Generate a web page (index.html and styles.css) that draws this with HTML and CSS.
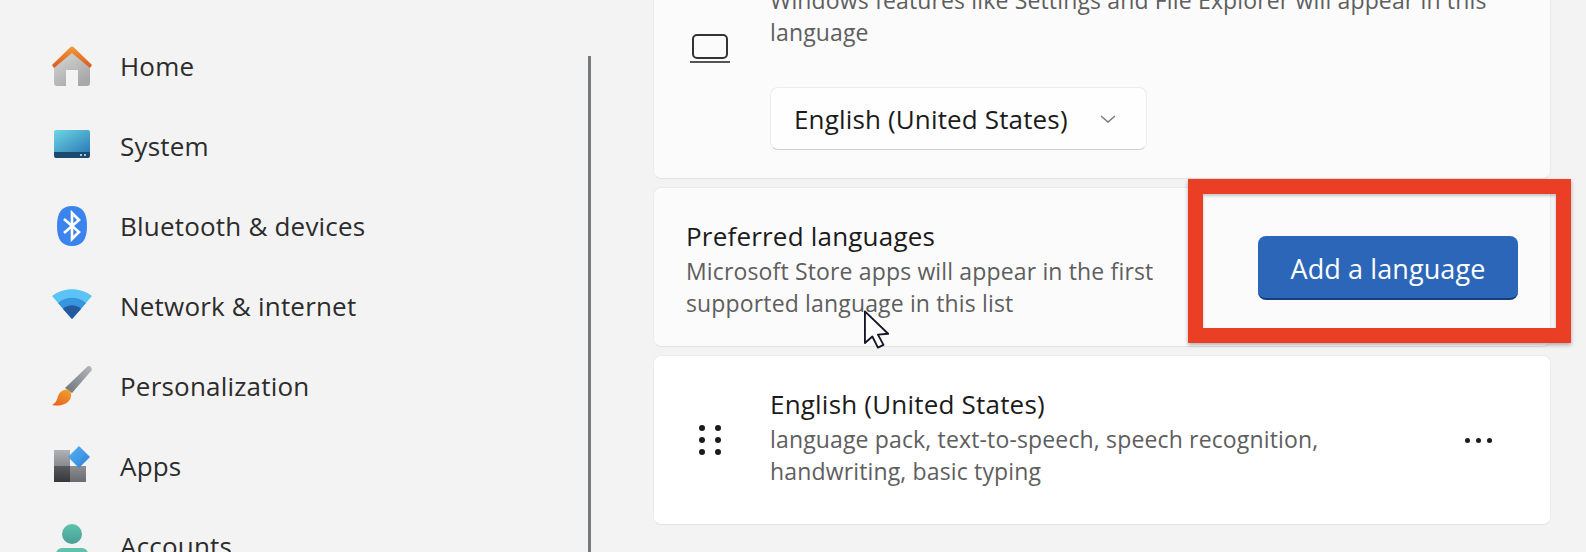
FILE: index.html
```html
<!DOCTYPE html>
<html lang="en">
<head>
  <meta charset="UTF-8" />
  <title>Settings - Language &amp; region</title>
  <link rel="stylesheet" href="styles.css">
</head>
<body>

  <aside class="sidebar">
    <nav class="nav">
      <a class="navItem">
        <svg class="navIcon" viewBox="0 0 40 40">
          <defs>
            <linearGradient id="homeWall" x1="0" y1="0" x2="0.6" y2="1"><stop offset="0" stop-color="#dcdcdc"/><stop offset="1" stop-color="#a8a8a8"/></linearGradient>
            <linearGradient id="homeRoof" x1="0" y1="0" x2="0" y2="1"><stop offset="0" stop-color="#f09a3c"/><stop offset="1" stop-color="#d9591c"/></linearGradient>
          </defs>
          <path d="M2 19 20 3 38 19V37a3 3 0 0 1-3 3H26V24H14V40H5a3 3 0 0 1-3-3Z" fill="url(#homeWall)"/>
          <path d="M0 19 18 1.500a3 3 0 0 1 4 0L40 19 38 22 20 7 2 22Z" fill="url(#homeRoof)"/>
        </svg>
        <span>Home</span>
      </a>
      <a class="navItem">
        <svg class="navIcon" viewBox="0 0 40 40">
          <defs>
            <linearGradient id="sysScreen" x1="0" y1="0" x2="1" y2="1"><stop offset="0" stop-color="#6fd6e4"/><stop offset="1" stop-color="#2b7cb8"/></linearGradient>
          </defs>
          <path d="M2 6a2 2 0 0 1 2-2H36a2 2 0 0 1 2 2V26H2Z" fill="url(#sysScreen)"/>
          <path d="M2 26H38V30a2 2 0 0 1-2 2H4a2 2 0 0 1-2-2Z" fill="#1c4a6e"/>
          <rect x="28" y="28" width="2" height="2" fill="#9cc4dc"/>
          <rect x="32" y="28" width="2" height="2" fill="#9cc4dc"/>
        </svg>
        <span>System</span>
      </a>
      <a class="navItem">
        <svg class="navIcon" viewBox="0 0 40 40">
          <path d="M20 0C30 0 35 6 35 20S30 40 20 40 5 34 5 20 10 0 20 0Z" fill="#3b84ee"/>
          <path d="M12 13 27 26 20 33V7L27 14 12 27" fill="none" stroke="#fff" stroke-width="2.600"/>
        </svg>
        <span>Bluetooth &amp; devices</span>
      </a>
      <a class="navItem">
        <svg class="navIcon" viewBox="0 0 40 40">
          <path d="M0 10C11 1 29 1 40 10L20 33Z" fill="#5cc4f4"/>
          <path d="M6 17C14 10 26 10 34 17L20 33Z" fill="#3795e0"/>
          <path d="M11 23C16 18 24 18 29 23L20 33Z" fill="#24589f"/>
        </svg>
        <span>Network &amp; internet</span>
      </a>
      <a class="navItem">
        <svg class="navIcon" viewBox="0 0 40 40">
          <defs>
            <linearGradient id="brushHandle" x1="0" y1="1" x2="1" y2="0"><stop offset="0" stop-color="#6e7378"/><stop offset="1" stop-color="#b4b8bc"/></linearGradient>
            <linearGradient id="brushTip" x1="0.800" y1="0" x2="0.200" y2="1"><stop offset="0" stop-color="#f0a030"/><stop offset="1" stop-color="#e8641e"/></linearGradient>
          </defs>
          <path d="M36 0C38.500 -0.500 40.500 2 39.500 4.500L20 27 13 22Z" fill="url(#brushHandle)"/>
          <path d="M12 24C17 22 20 26 19 31 17 38 8 41 0 39 4 37 5 34 6 30 7 27 9 25 12 24Z" fill="url(#brushTip)"/>
        </svg>
        <span>Personalization</span>
      </a>
      <a class="navItem">
        <svg class="navIcon" viewBox="0 0 40 40">
          <defs>
            <linearGradient id="appTop" x1="0" y1="0" x2="0" y2="1"><stop offset="0" stop-color="#b0b2b6"/><stop offset="1" stop-color="#888a8e"/></linearGradient>
            <linearGradient id="appDark" x1="0" y1="0" x2="0" y2="1"><stop offset="0" stop-color="#58595c"/><stop offset="1" stop-color="#37383b"/></linearGradient>
            <linearGradient id="appMid" x1="0" y1="0" x2="0" y2="1"><stop offset="0" stop-color="#8c8e90"/><stop offset="1" stop-color="#696b6e"/></linearGradient>
            <linearGradient id="appDiamond" x1="0" y1="0" x2="1" y2="1"><stop offset="0" stop-color="#5cb4f0"/><stop offset="1" stop-color="#2a80dc"/></linearGradient>
          </defs>
          <rect x="2" y="4" width="16" height="16" fill="url(#appTop)"/>
          <rect x="2" y="20" width="16" height="16" fill="url(#appDark)"/>
          <rect x="18" y="20" width="16" height="16" fill="url(#appMid)"/>
          <path d="M27 0 38 11 27 22 16 11Z" fill="url(#appDiamond)"/>
        </svg>
        <span>Apps</span>
      </a>
      <a class="navItem">
        <svg class="navIcon" viewBox="0 0 40 40">
          <defs>
            <linearGradient id="userHead" x1="0" y1="0" x2="0" y2="1"><stop offset="0" stop-color="#5cc4ac"/><stop offset="1" stop-color="#4a9c94"/></linearGradient>
          </defs>
          <circle cx="20" cy="8" r="10" fill="url(#userHead)"/>
          <path d="M4 28a6 6 0 0 1 6-6H30a6 6 0 0 1 6 6V40H4Z" fill="#5cc4ac"/>
        </svg>
        <span>Accounts</span>
      </a>
    </nav>
    <div class="scrollThumb"></div>
  </aside>

  <main class="content">
    <section class="card cardRow">
      <svg class="rowIcon laptopIcon" viewBox="0 0 40 30">
        <rect x="3" y="1" width="34" height="23" rx="4" fill="none" stroke="#333" stroke-width="2"/>
        <path d="M0 28H40" stroke="#555" stroke-width="2"/>
      </svg>
      <div class="rowBody">
        <p class="subText">Windows features like Settings and File Explorer will appear in this language</p>
        <div class="dropdown">
          <span>English (United States)</span>
          <svg class="chevron" viewBox="0 0 16 8"><path d="M1 1 8 7 15 1" fill="none" stroke="#777" stroke-width="1.400"/></svg>
        </div>
      </div>
    </section>

    <section class="card cardPreferred">
      <div class="preferredText">
        <h2 class="titleText">Preferred languages</h2>
        <p class="subText">Microsoft Store apps will appear in the first supported language in this list</p>
      </div>
      <button class="primaryBtn">Add a language</button>
    </section>

    <section class="card cardLanguage">
      <div class="rowIcon gripIcon">
        <i></i><i></i><i></i><i></i><i></i><i></i>
      </div>
      <div class="languageBody">
        <h2 class="titleText">English (United States)</h2>
        <p class="subText">language pack, text-to-speech, speech recognition, handwriting, basic typing</p>
      </div>
      <div class="moreDots"><i></i><i></i><i></i></div>
    </section>
  </main>

  <div class="callout"></div>

  <svg class="cursor" viewBox="0 0 28 42">
    <path d="M1 1V35L9 28 15 40 21 37 15 26 26 25Z" fill="#fff" stroke="#16162a" stroke-width="2" stroke-linejoin="round"/>
  </svg>

</body>
</html>
```

FILE: styles.css
```css
* {
  box-sizing: border-box;
}

html, body {
  margin: 0;
  height: 100%;
}

body {
  display: flex;
  height: 552px;
  overflow: hidden;
  position: relative;
  background: #f3f3f3;
  color: #1b1b1b;
  font-family: 'Open Sans', 'Noto Sans', sans-serif;
}

.sidebar {
  width: 591px;
  flex-shrink: 0;
  display: flex;
  justify-content: space-between;
  overflow: hidden;
}

.nav {
  padding: 26px 0 0 52px;
}

.navItem {
  display: flex;
  align-items: center;
  gap: 28px;
  height: 80px;
  font-size: 26px;
  letter-spacing: 0.2px;
  color: #2c2c2c;
}

.navIcon {
  width: 40px;
  height: 40px;
  flex-shrink: 0;
  overflow: visible;
}

.scrollThumb {
  width: 3px;
  margin-top: 56px;
  background: #77797b;
}

.content {
  flex: 1;
  min-width: 0;
  display: flex;
  flex-direction: column;
  justify-content: flex-end;
  gap: 8px;
  padding: 0 35px 27px 62px;
  overflow: hidden;
}

.card {
  flex-shrink: 0;
  background: #fbfbfb;
  border: 1px solid #ebebeb;
  border-bottom-color: #e2e2e2;
  border-radius: 8px;
}

.cardRow {
  display: flex;
  align-items: flex-start;
  padding: 20px 32px 28px 36px;
}

.rowIcon {
  width: 40px;
  flex-shrink: 0;
}

.laptopIcon {
  height: 30px;
  margin-top: 50px;
}

.rowBody {
  margin-left: 40px;
  flex: 1;
}

.rowBody .subText {
  max-width: 730px;
}

.subText {
  margin: 0;
  font-size: 23px;
  line-height: 32px;
  letter-spacing: 0.15px;
  color: #5e5e5e;
}

.titleText {
  margin: 0;
  font-size: 26px;
  line-height: 37px;
  letter-spacing: 0.2px;
  font-weight: 400;
  color: #1b1b1b;
}

.dropdown {
  display: flex;
  align-items: center;
  justify-content: space-between;
  width: 377px;
  height: 63px;
  margin-top: 39px;
  padding: 0 30px 0 23px;
  font-size: 26px;
  letter-spacing: 0.15px;
  background: #fefefe;
  border: 1px solid #ececec;
  border-bottom-color: #d0d0d0;
  border-radius: 8px;
}

.chevron {
  width: 16px;
  height: 8px;
}

.cardPreferred {
  display: flex;
  align-items: center;
  justify-content: space-between;
  height: 160px;
  padding: 0 32px 0 32px;
}

.preferredText {
  width: 500px;
  padding-top: 3px;
}

.primaryBtn {
  width: 260px;
  height: 64px;
  margin-top: 2px;
  padding-top: 3px;
  border: none;
  border-bottom: 2px solid #173f78;
  border-radius: 8px;
  background: #2b66b8;
  color: #fff;
  font-family: inherit;
  font-size: 27px;
  letter-spacing: 0.1px;
}

.cardLanguage {
  display: flex;
  align-items: center;
  height: 170px;
  padding: 0 58px 0 36px;
  background: #fff;
}

.gripIcon {
  display: grid;
  grid-template-columns: 6px 6px;
  justify-content: center;
  column-gap: 10px;
  row-gap: 6px;
}

.gripIcon i,
.moreDots i {
  display: block;
  width: 6px;
  height: 6px;
  border-radius: 50%;
  background: #1b1b1b;
}

.languageBody {
  margin-left: 40px;
  flex: 1;
  padding-bottom: 7px;
}

.languageBody .subText {
  max-width: 600px;
}

.moreDots {
  display: flex;
  gap: 6px;
}

.moreDots i {
  width: 5px;
  height: 5px;
}

/* annotation drawn over the page */
.callout {
  position: absolute;
  left: 1188px;
  top: 179px;
  width: 383px;
  height: 164px;
  border: 15px solid #ea3f25;
  box-shadow: 0 2px 4px rgba(0, 0, 0, 0.3), inset 0 2px 3px rgba(0, 0, 0, 0.2);
}

.cursor {
  position: absolute;
  left: 864px;
  top: 310px;
  width: 26px;
  height: 40px;
}
```
